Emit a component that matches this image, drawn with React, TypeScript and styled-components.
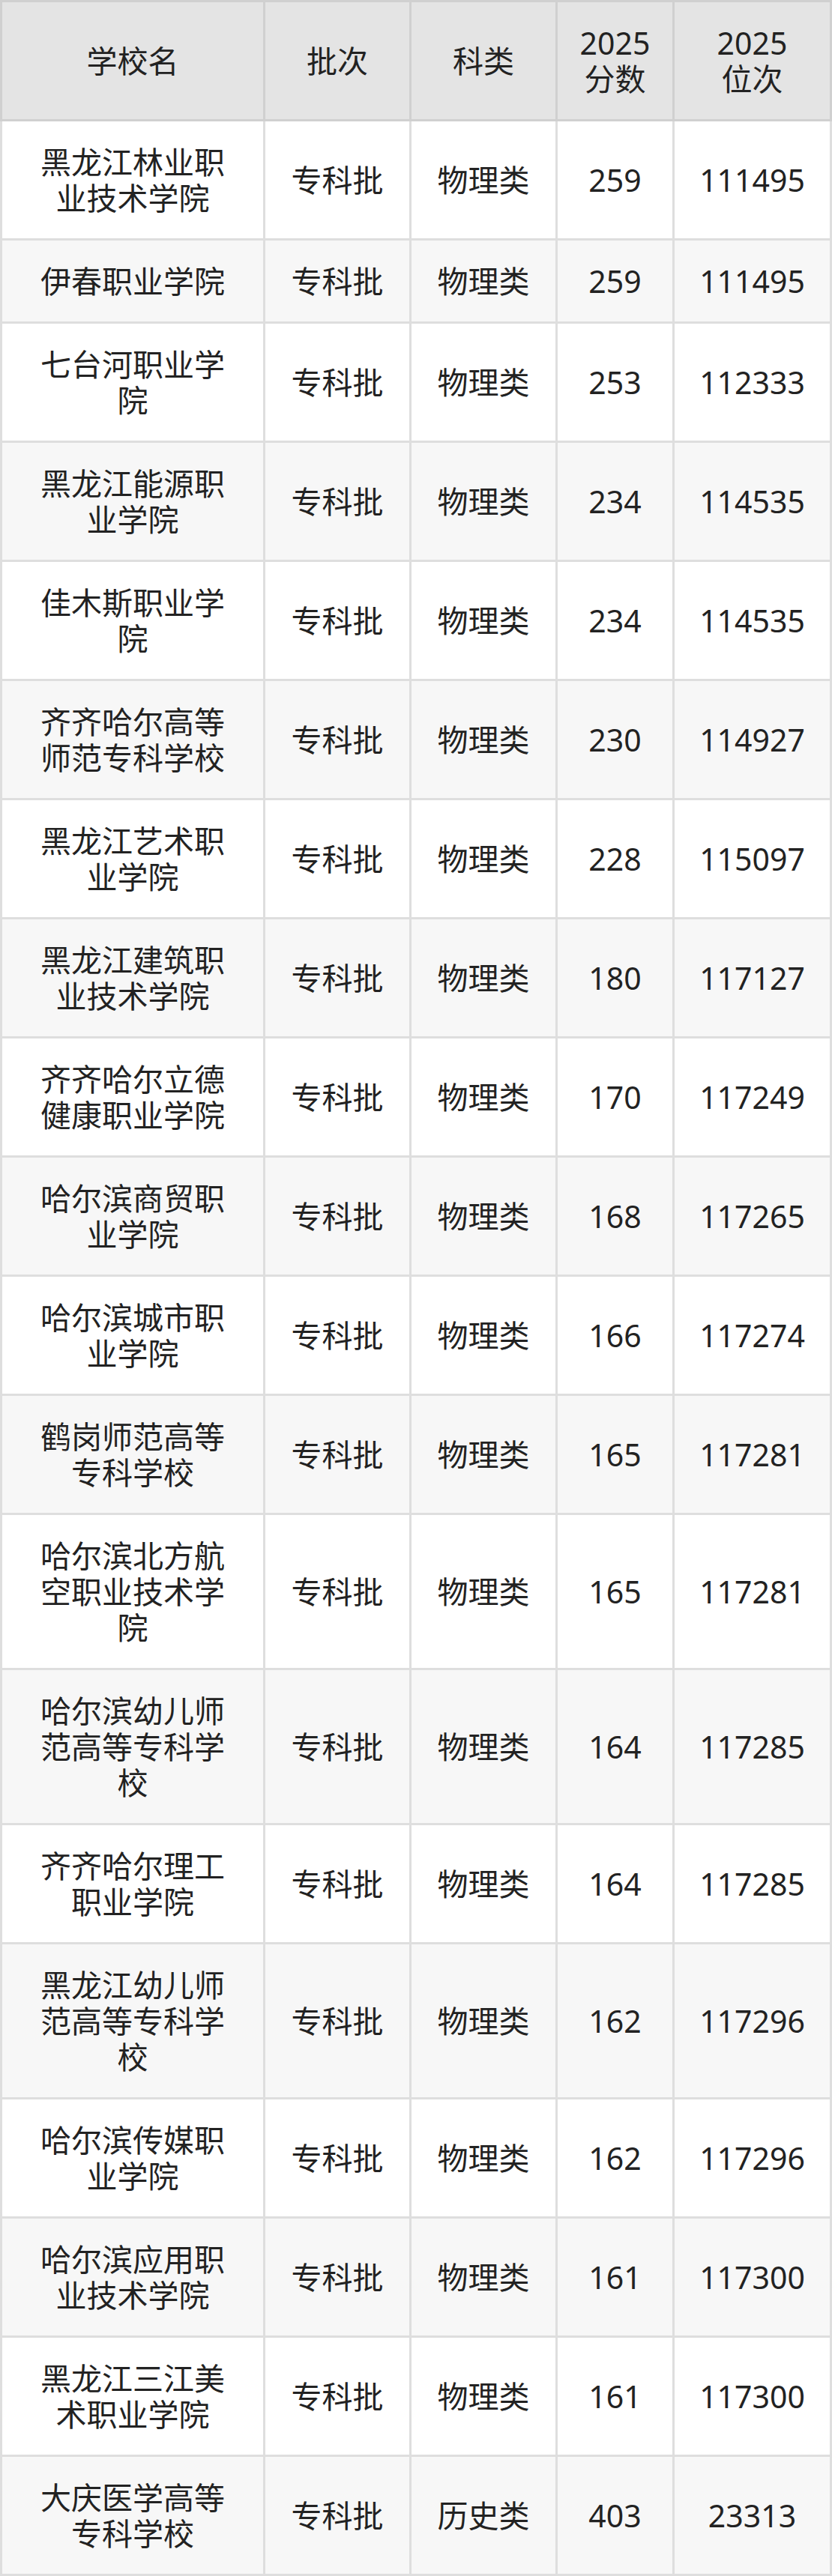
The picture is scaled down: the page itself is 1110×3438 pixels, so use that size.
import React from 'react';
import styled, { createGlobalStyle, css } from 'styled-components';

const GlobalStyle = createGlobalStyle`
  html, body {
    margin: 0;
    padding: 0;
    background: #ffffff;
  }
  body {
    font-family: "Noto Sans", "Noto Sans CJK SC", sans-serif;
    color: #222222;
  }
`;

// Table grid
const Table = styled.div`
  display: grid;
  grid-template-columns: 354px 195px 195px 156px 210px;
  width: 1110px;
`;

const Cell = styled.div<{ head?: boolean; striped?: boolean; first?: boolean; name?: boolean }>`
  display: flex;
  flex-direction: column;
  align-items: center;
  justify-content: center;
  text-align: center;
  padding: 30px ${({ name }) => (name ? 44 : 8)}px;
  font-size: 41px;
  line-height: 48px;
  color: #222222;
  background-color: ${({ head, striped }) => (head ? '#e4e4e4' : striped ? '#f7f7f7' : '#ffffff')};
  border-right: 3px solid ${({ head }) => (head ? '#d0d0d0' : '#dedede')};
  border-bottom: 3px solid ${({ head }) => (head ? '#d0d0d0' : '#dedede')};
  ${({ first, head }) => first && css`
    border-left: 3px solid ${head ? '#d0d0d0' : '#dedede'};
  `}
  ${({ head }) => head && css`
    border-top: 3px solid #d0d0d0;
  `}
  word-break: break-all;
`;

const HeadLine = styled.span`
  display: block;
  height: 48px;
  line-height: 48px;
`;

interface Row {
  name: string;
  batch: string;
  subject: string;
  score: number;
  rank: number;
}

const rows: Row[] = [
  { name: '黑龙江林业职业技术学院', batch: '专科批', subject: '物理类', score: 259, rank: 111495 },
  { name: '伊春职业学院', batch: '专科批', subject: '物理类', score: 259, rank: 111495 },
  { name: '七台河职业学院', batch: '专科批', subject: '物理类', score: 253, rank: 112333 },
  { name: '黑龙江能源职业学院', batch: '专科批', subject: '物理类', score: 234, rank: 114535 },
  { name: '佳木斯职业学院', batch: '专科批', subject: '物理类', score: 234, rank: 114535 },
  { name: '齐齐哈尔高等师范专科学校', batch: '专科批', subject: '物理类', score: 230, rank: 114927 },
  { name: '黑龙江艺术职业学院', batch: '专科批', subject: '物理类', score: 228, rank: 115097 },
  { name: '黑龙江建筑职业技术学院', batch: '专科批', subject: '物理类', score: 180, rank: 117127 },
  { name: '齐齐哈尔立德健康职业学院', batch: '专科批', subject: '物理类', score: 170, rank: 117249 },
  { name: '哈尔滨商贸职业学院', batch: '专科批', subject: '物理类', score: 168, rank: 117265 },
  { name: '哈尔滨城市职业学院', batch: '专科批', subject: '物理类', score: 166, rank: 117274 },
  { name: '鹤岗师范高等专科学校', batch: '专科批', subject: '物理类', score: 165, rank: 117281 },
  { name: '哈尔滨北方航空职业技术学院', batch: '专科批', subject: '物理类', score: 165, rank: 117281 },
  { name: '哈尔滨幼儿师范高等专科学校', batch: '专科批', subject: '物理类', score: 164, rank: 117285 },
  { name: '齐齐哈尔理工职业学院', batch: '专科批', subject: '物理类', score: 164, rank: 117285 },
  { name: '黑龙江幼儿师范高等专科学校', batch: '专科批', subject: '物理类', score: 162, rank: 117296 },
  { name: '哈尔滨传媒职业学院', batch: '专科批', subject: '物理类', score: 162, rank: 117296 },
  { name: '哈尔滨应用职业技术学院', batch: '专科批', subject: '物理类', score: 161, rank: 117300 },
  { name: '黑龙江三江美术职业学院', batch: '专科批', subject: '物理类', score: 161, rank: 117300 },
  { name: '大庆医学高等专科学校', batch: '专科批', subject: '历史类', score: 403, rank: 23313 },
];

const App: React.FC = () => {
  return (
    <>
      <GlobalStyle />
      <Table>
        <Cell head first name>学校名</Cell>
        <Cell head>批次</Cell>
        <Cell head>科类</Cell>
        <Cell head>
          <HeadLine>2025</HeadLine>
          <HeadLine>分数</HeadLine>
        </Cell>
        <Cell head>
          <HeadLine>2025</HeadLine>
          <HeadLine>位次</HeadLine>
        </Cell>

        {rows.map((r, i) => {
          const striped = i % 2 === 1;
          return (
            <React.Fragment key={i}>
              <Cell first name striped={striped}>{r.name}</Cell>
              <Cell striped={striped}>{r.batch}</Cell>
              <Cell striped={striped}>{r.subject}</Cell>
              <Cell striped={striped}>{r.score}</Cell>
              <Cell striped={striped}>{r.rank}</Cell>
            </React.Fragment>
          );
        })}
      </Table>
    </>
  );
};

export default App;
